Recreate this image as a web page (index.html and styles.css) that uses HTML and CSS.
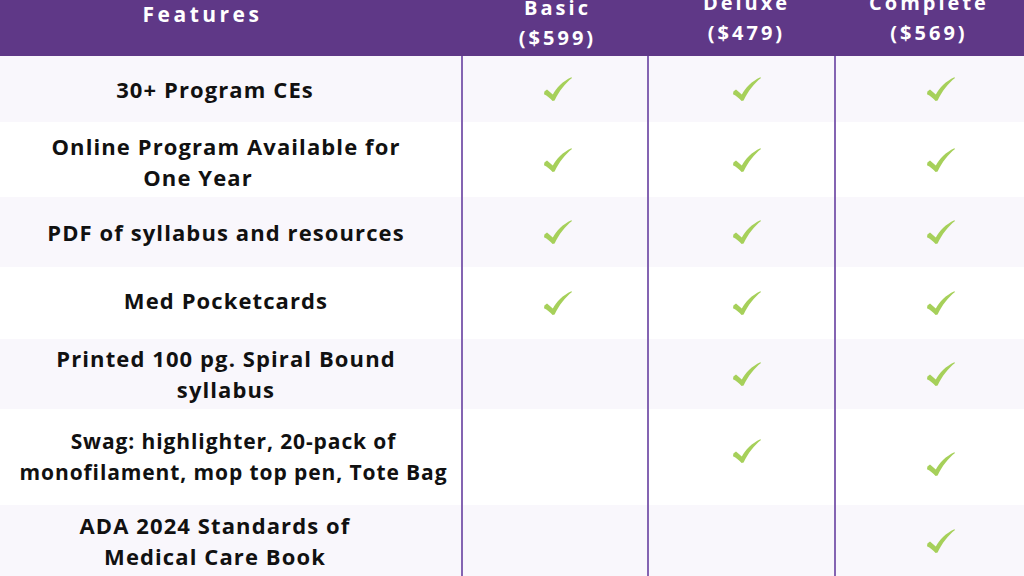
FILE: index.html
```html
<!DOCTYPE html>
<html lang="en">
<head>
<meta charset="utf-8">
<title>Program Comparison</title>
<link rel="stylesheet" href="styles.css">
</head>
<body>
<svg class="defs" width="0" height="0" aria-hidden="true">
  <symbol id="tick" viewBox="0 0 28 24">
    <path d="M0.4 14.6 L3 12.6 L8.8 17.6 C12.6 10.4 18.8 4.2 27.4 0.2 L28 0.9 C21.2 6.2 15.2 13.8 10.6 23.4 L8.6 24 C6.2 21.2 3.2 18.8 0 17.2 Z"/>
  </symbol>
</svg>
<div class="table">
  <div class="head">
    <div class="hcell h-feat">Features</div>
    <div class="hcell h-basic">Basic<br>($599)</div>
    <div class="hcell h-deluxe">Deluxe<br>($479)</div>
    <div class="hcell h-complete">Complete<br>($569)</div>
  </div>

  <div class="row alt r1">
    <div class="feat pad-wide"><span class="label">30+ Program CEs</span></div>
    <div class="cell c-basic"><svg class="check"><use href="#tick"/></svg></div>
    <div class="cell c-deluxe"><svg class="check"><use href="#tick"/></svg></div>
    <div class="cell c-complete"><svg class="check"><use href="#tick"/></svg></div>
  </div>

  <div class="row r2">
    <div class="feat lower"><span class="label">Online Program Available for<br><span class="tail">One Year</span></span></div>
    <div class="cell c-basic"><svg class="check"><use href="#tick"/></svg></div>
    <div class="cell c-deluxe"><svg class="check"><use href="#tick"/></svg></div>
    <div class="cell c-complete"><svg class="check"><use href="#tick"/></svg></div>
  </div>

  <div class="row alt r3">
    <div class="feat"><span class="label">PDF of syllabus and resources</span></div>
    <div class="cell c-basic"><svg class="check"><use href="#tick"/></svg></div>
    <div class="cell c-deluxe"><svg class="check"><use href="#tick"/></svg></div>
    <div class="cell c-complete"><svg class="check"><use href="#tick"/></svg></div>
  </div>

  <div class="row r4">
    <div class="feat higher"><span class="label">Med Pocketcards</span></div>
    <div class="cell c-basic"><svg class="check"><use href="#tick"/></svg></div>
    <div class="cell c-deluxe"><svg class="check"><use href="#tick"/></svg></div>
    <div class="cell c-complete"><svg class="check"><use href="#tick"/></svg></div>
  </div>

  <div class="row alt r5">
    <div class="feat"><span class="label">Printed 100 pg. Spiral Bound<br>syllabus</span></div>
    <div class="cell c-basic"></div>
    <div class="cell c-deluxe"><svg class="check"><use href="#tick"/></svg></div>
    <div class="cell c-complete"><svg class="check"><use href="#tick"/></svg></div>
  </div>

  <div class="row r6">
    <div class="feat small pad-right"><span class="label">Swag: highlighter, 20-pack of<br>monofilament, mop top pen, Tote Bag</span></div>
    <div class="cell c-basic"></div>
    <div class="cell c-deluxe"><svg class="check up"><use href="#tick"/></svg></div>
    <div class="cell c-complete"><svg class="check down"><use href="#tick"/></svg></div>
  </div>

  <div class="row alt r7">
    <div class="feat pad-wide"><span class="label">ADA 2024 Standards of<br>Medical Care Book</span></div>
    <div class="cell c-basic"></div>
    <div class="cell c-deluxe"></div>
    <div class="cell c-complete"><svg class="check"><use href="#tick"/></svg></div>
  </div>
</div>
</body>
</html>
```

FILE: styles.css
```css
html, body {
  margin: 0;
  padding: 0;
}

body {
  width: 1024px;
  height: 576px;
  overflow: hidden;
  background: #ffffff;
  font-family: "Open Sans", "Liberation Sans", sans-serif;
  color: #111111;
}

.defs {
  position: absolute;
  width: 0;
  height: 0;
  overflow: hidden;
}

.table {
  display: flex;
  flex-direction: column;
}

.head,
.row {
  display: grid;
  grid-template-columns: 461px 186px 187px 190px;
}

.head {
  height: 56px;
  grid-template-rows: 56px;
  overflow: hidden;
  background: #5f3887;
  color: #ffffff;
  font-weight: 700;
  font-size: 20px;
  line-height: 30px;
  letter-spacing: 3px;
  text-align: center;
  align-items: end;
}

.hcell {
  white-space: nowrap;
}

.h-feat {
  font-size: 21px;
  letter-spacing: 3.5px;
  padding-bottom: 27px;
  padding-right: 56px;
}

.h-basic {
  padding-bottom: 3px;
  padding-left: 7px;
}

.h-deluxe {
  padding-bottom: 8px;
  padding-left: 12px;
}

.h-complete {
  padding-bottom: 8px;
  padding-left: 0;
}

.row {
  background: #ffffff;
}

.row.alt {
  background: #f9f7fc;
}

.r1 { height: 66px; }
.r2 { height: 75px; }
.r3 { height: 70px; }
.r4 { height: 72px; }
.r5 { height: 70px; }
.r6 { height: 96px; }
.r7 { height: 72px; }

.feat {
  display: flex;
  align-items: center;
  justify-content: center;
  text-align: center;
  font-weight: 700;
  font-size: 22px;
  line-height: 31px;
  letter-spacing: 1.1px;
  padding-right: 9px;
  white-space: nowrap;
}

.feat.small {
  font-size: 21px;
  letter-spacing: 0.9px;
}

.feat.lower {
  padding-top: 4px;
}

.feat.higher {
  padding-bottom: 5px;
}

.label {
  display: block;
}

.feat.pad-wide {
  padding-right: 31px;
}

.feat.pad-right {
  padding-right: 0;
  padding-left: 6px;
}

.tail {
  padding-right: 56px;
}

.cell {
  display: flex;
  align-items: center;
  justify-content: center;
  border-left: 2px solid #8464b2;
}

.c-basic {
  padding-left: 6px;
}

.c-deluxe {
  padding-left: 10px;
}

.c-complete {
  padding-left: 22px;
}

.check {
  width: 28px;
  height: 24px;
  fill: #a6d05a;
}

.check.up {
  margin-bottom: 12px;
}

.check.down {
  margin-top: 14px;
}
```
